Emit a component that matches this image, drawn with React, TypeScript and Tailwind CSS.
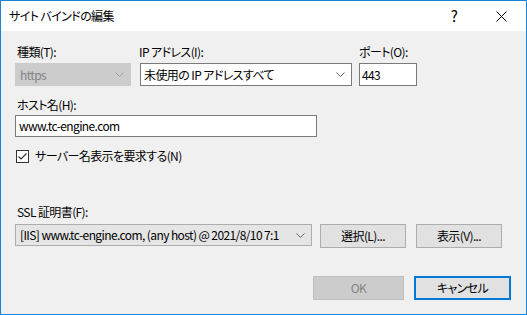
import React from "react";

const font = { fontFamily: '"Noto Sans CJK JP", "Noto Sans", sans-serif' };

function Chevron({ color = "#606060" }: { color?: string }) {
  return (
    <svg width="9" height="5" viewBox="0 0 9 5" className="shrink-0">
      <polyline points="0.5,0.5 4.5,4.5 8.5,0.5" fill="none" stroke={color} strokeWidth="1" />
    </svg>
  );
}

export default function App() {
  return (
    <div
      className="w-[527px] h-[315px] border border-[#1883d7] bg-[#f0f0f0] flex flex-col text-[12px] leading-[16px] tracking-[-0.6px] text-black overflow-hidden [font-feature-settings:'palt']"
      style={font}
    >
      {/* title bar */}
      <div className="h-[30px] bg-white flex items-center shrink-0">
        <div className="pl-[8px] flex-1">サイト バインドの編集</div>
        <div className="w-[30px] text-center text-[15px] mr-[17px]">?</div>
        <div className="w-[30px] flex justify-center mr-[10px]">
          <svg width="11" height="11" viewBox="0 0 11 11">
            <path d="M0.5 0.5 L10.5 10.5 M10.5 0.5 L0.5 10.5" stroke="#000" strokeWidth="1" />
          </svg>
        </div>
      </div>

      <div className="flex flex-col px-[14px]">
        {/* row 1 */}
        <div className="flex mt-[13px]">
          <div className="flex flex-col w-[116px]">
            <div className="pl-[2px] h-[16px]">種類(T):</div>
            <div className="mt-[3px] h-[23px] bg-[#cccccc] border border-[#cccccc] flex items-center pl-[4px] pr-[6px] text-[#838383]">
              <span className="flex-1">https</span>
              <Chevron color="#a0a0a0" />
            </div>
          </div>
          <div className="flex flex-col w-[212px] ml-[9px]">
            <div className="h-[16px] -ml-[1px]">IP アドレス(I):</div>
            <div className="mt-[3px] h-[23px] bg-white border border-[#7a7a7a] flex items-center pl-[3px] pr-[6px]">
              <span className="flex-1">未使用の IP アドレスすべて</span>
              <Chevron />
            </div>
          </div>
          <div className="flex flex-col w-[58px] ml-[7px]">
            <div className="h-[16px]">ポート(O):</div>
            <div className="mt-[3px] h-[23px] bg-white border border-[#7a7a7a] flex items-center pl-[2px]">
              443
            </div>
          </div>
        </div>

        {/* host */}
        <div className="pl-[2px] h-[16px] mt-[11px]">ホスト名(H):</div>
        <div className="mt-[2px] w-[302px] h-[22px] bg-white border border-[#7a7a7a] flex items-center pl-[3px]">
          www.tc-engine.com
        </div>

        {/* checkbox */}
        <div className="flex items-center mt-[11px] h-[16px]">
          <div className="ml-[1px] w-[13px] h-[13px] bg-white border border-[#333333] flex items-center justify-center">
            <svg width="11" height="11" viewBox="0 0 11 11">
              <polyline points="1.5,5.5 4,8 9.5,2.5" fill="none" stroke="#333" strokeWidth="1.2" />
            </svg>
          </div>
          <span className="ml-[6px]">サーバー名表示を要求する(N)</span>
        </div>

        {/* ssl */}
        <div className="pl-[2px] h-[16px] mt-[40px]">SSL 証明書(F):</div>
        <div className="flex mt-[4px] items-start">
          <div className="w-[297px] h-[22px] bg-[#e5e5e5] border border-[#adadad] flex items-center pl-[4px] pr-[6px] overflow-hidden">
            <span className="flex-1 whitespace-nowrap overflow-hidden">[IIS] www.tc-engine.com, (any host) @ 2021/8/10 7:1</span>
            <Chevron />
          </div>
          <div className="ml-[8px] w-[86px] h-[24px] bg-[#e1e1e1] border border-[#adadad] flex items-center justify-center">
            選択(L)...
          </div>
          <div className="ml-[10px] w-[86px] h-[24px] bg-[#e1e1e1] border border-[#adadad] flex items-center justify-center">
            表示(V)...
          </div>
        </div>

        {/* ok / cancel */}
        <div className="flex justify-end mt-[28px] pr-[1px]">
          <div className="w-[91px] h-[24px] bg-[#cccccc] border border-[#bfbfbf] flex items-center justify-center text-[#838383]">
            OK
          </div>
          <div className="ml-[10px] w-[97px] h-[24px] bg-[#e1e1e1] border-2 border-[#0078d7] flex items-center justify-center">
            キャンセル
          </div>
        </div>
      </div>
    </div>
  );
}
